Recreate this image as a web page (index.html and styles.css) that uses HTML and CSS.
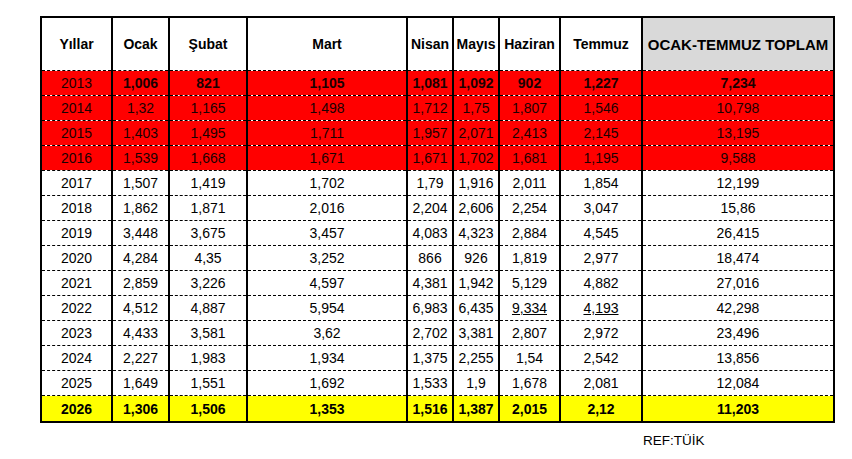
FILE: index.html
```html
<!DOCTYPE html>
<html lang="tr">
<head>
<meta charset="utf-8">
<title>Ocak-Temmuz</title>
<link rel="stylesheet" href="styles.css">
</head>
<body>
<div class="wrap">
<table class="data">
<colgroup>
<col class="c-yil"><col class="c-ocak"><col class="c-subat"><col class="c-mart"><col class="c-nisan"><col class="c-mayis"><col class="c-haziran"><col class="c-temmuz"><col class="c-toplam">
</colgroup>
<thead>
<tr><th>Yıllar</th><th>Ocak</th><th>Şubat</th><th>Mart</th><th>Nisan</th><th>Mayıs</th><th>Haziran</th><th>Temmuz</th><th class="total-head">OCAK-TEMMUZ TOPLAM</th></tr>
</thead>
<tbody>
<tr class="red strong"><td class="plain">2013</td><td>1,006</td><td>821</td><td>1,105</td><td>1,081</td><td>1,092</td><td>902</td><td>1,227</td><td>7,234</td></tr>
<tr class="red"><td>2014</td><td>1,32</td><td>1,165</td><td>1,498</td><td>1,712</td><td>1,75</td><td>1,807</td><td>1,546</td><td>10,798</td></tr>
<tr class="red"><td>2015</td><td>1,403</td><td>1,495</td><td>1,711</td><td>1,957</td><td>2,071</td><td>2,413</td><td>2,145</td><td>13,195</td></tr>
<tr class="red"><td>2016</td><td>1,539</td><td>1,668</td><td>1,671</td><td>1,671</td><td>1,702</td><td>1,681</td><td>1,195</td><td>9,588</td></tr>
<tr><td>2017</td><td>1,507</td><td>1,419</td><td>1,702</td><td>1,79</td><td>1,916</td><td>2,011</td><td>1,854</td><td>12,199</td></tr>
<tr><td>2018</td><td>1,862</td><td>1,871</td><td>2,016</td><td>2,204</td><td>2,606</td><td>2,254</td><td>3,047</td><td>15,86</td></tr>
<tr><td>2019</td><td>3,448</td><td>3,675</td><td>3,457</td><td>4,083</td><td>4,323</td><td>2,884</td><td>4,545</td><td>26,415</td></tr>
<tr><td>2020</td><td>4,284</td><td>4,35</td><td>3,252</td><td>866</td><td>926</td><td>1,819</td><td>2,977</td><td>18,474</td></tr>
<tr><td>2021</td><td>2,859</td><td>3,226</td><td>4,597</td><td>4,381</td><td>1,942</td><td>5,129</td><td>4,882</td><td>27,016</td></tr>
<tr><td>2022</td><td>4,512</td><td>4,887</td><td>5,954</td><td>6,983</td><td>6,435</td><td class="ul">9,334</td><td class="ul">4,193</td><td>42,298</td></tr>
<tr><td>2023</td><td>4,433</td><td>3,581</td><td>3,62</td><td>2,702</td><td>3,381</td><td>2,807</td><td>2,972</td><td>23,496</td></tr>
<tr><td>2024</td><td>2,227</td><td>1,983</td><td>1,934</td><td>1,375</td><td>2,255</td><td>1,54</td><td>2,542</td><td>13,856</td></tr>
<tr><td>2025</td><td>1,649</td><td>1,551</td><td>1,692</td><td>1,533</td><td>1,9</td><td>1,678</td><td>2,081</td><td>12,084</td></tr>
<tr class="yellow strong last"><td>2026</td><td>1,306</td><td>1,506</td><td>1,353</td><td>1,516</td><td>1,387</td><td>2,015</td><td>2,12</td><td>11,203</td></tr>
</tbody>
</table>
<div class="ref">REF:TÜİK</div>
</div>
</body>
</html>
```
FILE: styles.css
```css
html, body {
  margin: 0;
  padding: 0;
  background: #ffffff;
}

body {
  font-family: "Liberation Sans", Arial, sans-serif;
  color: #000;
}

.wrap {
  padding: 16px 0 0 40px;
}

.data {
  border-collapse: collapse;
  table-layout: fixed;
  width: 795px;
  border: 2px solid #000;
}

.c-yil { width: 71px; }
.c-ocak { width: 57px; }
.c-subat { width: 78px; }
.c-mart { width: 160px; }
.c-nisan { width: 46px; }
.c-mayis { width: 46px; }
.c-haziran { width: 61px; }
.c-temmuz { width: 82px; }
.c-toplam { width: 192px; }

.data th,
.data td {
  border-left: 2px solid #000;
  border-right: 2px solid #000;
  border-top: 1px dashed #000;
  border-bottom: 1px dashed #000;
  text-align: center;
  padding: 0;
  white-space: nowrap;
  overflow: hidden;
}

.data th {
  height: 52px;
  font-size: 14px;
  font-weight: bold;
  border-top: 2px solid #000;
}

.data th.total-head {
  background: #d9d9d9;
  font-size: 15px;
}

.data td {
  height: 24px;
  font-size: 14px;
  line-height: 16px;
}

.data tr.red td {
  background: #ff0000;
  color: #1a0000;
}

.data tr.yellow td {
  background: #ffff00;
}

.data tr.strong td {
  font-weight: bold;
}

.data tr.strong td.plain {
  font-weight: normal;
}

.data tr.last td {
  height: 25px;
  border-bottom: 2px solid #000;
}

.data td.ul {
  text-decoration: underline;
}

.ref {
  margin: 10px 0 0 603px;
  font-size: 13.5px;
}
```
